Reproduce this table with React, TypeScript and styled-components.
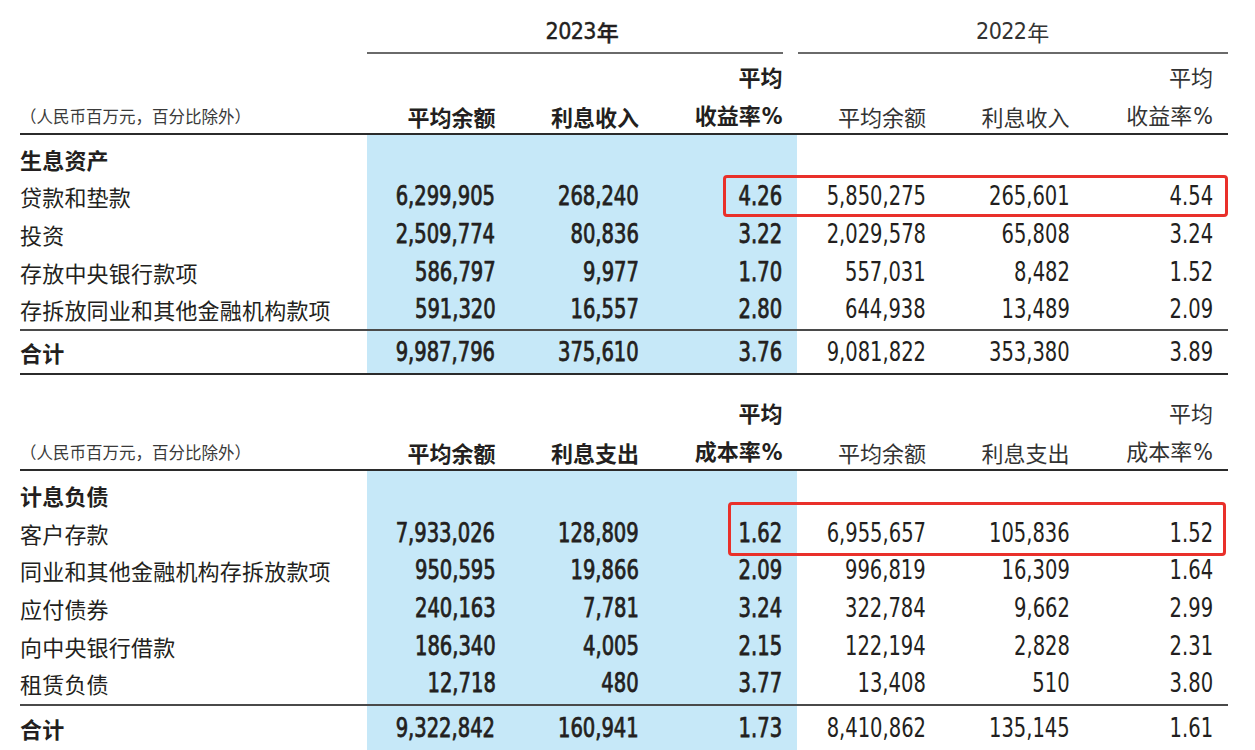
import React from 'react';
import styled, { createGlobalStyle, css } from 'styled-components';

const COLS = '347px repeat(6, 143.5px)';
const NUM_FONT = '"DejaVu Sans Condensed", "Liberation Sans", sans-serif';
const CJK_FONT = '"Noto Sans CJK SC", "Noto Sans", sans-serif';
const BLUE = '#c6e8f8';
const INK = '#231f20';

const GlobalStyle = createGlobalStyle`
  html, body { margin: 0; padding: 0; background: #ffffff; }
  body { font-family: ${CJK_FONT}; color: ${INK}; }
  * { box-sizing: border-box; }
`;

const Page = styled.div`
  width: 1228px;
  padding-left: 20px;
`;

const blueBand = css`
  background: linear-gradient(
    to right,
    transparent 347px,
    ${BLUE} 347px,
    ${BLUE} 777px,
    transparent 777px
  );
`;

const YearRow = styled.div`
  display: grid;
  grid-template-columns: ${COLS};
  height: 54px;
`;

const YearGroup = styled.div<{ $bold?: boolean; $trim?: boolean }>`
  grid-column: span 3;
  display: flex;
  align-items: flex-end;
  justify-content: center;
  padding-bottom: 8px;
  line-height: 26px;
  font-size: 22px;
  font-weight: ${(p) => (p.$bold ? 500 : 400)};
  -webkit-text-stroke: ${(p) => (p.$bold ? '0.4px currentColor' : '0')};
  border-bottom: 2px solid #6a6a6a;
  margin-right: ${(p) => (p.$trim ? '15px' : '0')};
  padding-left: ${(p) => (p.$trim ? '15px' : '0')};
  color: ${(p) => (p.$bold ? INK : '#333')};
`;

const YearDigits = styled.span`
  font-family: ${NUM_FONT};
  font-size: 23px;
  letter-spacing: -0.6px;
  margin-right: 1px;
`;

const HeaderRow = styled.div<{ $gap?: boolean }>`
  display: grid;
  grid-template-columns: ${COLS};
  height: 81px;
  padding-top: 3px;
  margin-top: ${(p) => (p.$gap ? '15px' : '0')};
  border-bottom: 2px solid #2b2b2b;
`;

const UnitCell = styled.div`
  align-self: end;
  font-size: 16.5px;
  line-height: 38px;
  color: #3a3a3a;
`;

const HeadCell = styled.div<{ $bold?: boolean }>`
  display: flex;
  flex-direction: column;
  justify-content: flex-end;
  align-items: flex-end;
  padding-right: 15px;
  font-size: 22px;
  line-height: 38px;
  font-weight: ${(p) => (p.$bold ? 600 : 400)};
  color: ${(p) => (p.$bold ? INK : '#333')};
  white-space: nowrap;
`;

const Pct = styled.span`
  font-family: ${NUM_FONT};
  font-size: 23px;
  margin-left: 1px;
`;

const Body = styled.div`
  display: flex;
  flex-direction: column;
  padding: 5px 0 1.5px;
  ${blueBand}
`;

const Row = styled.div`
  position: relative;
  display: grid;
  grid-template-columns: ${COLS};
  align-items: center;
  height: 37.6px;
`;

const TotalRow = styled.div<{ $closed?: boolean }>`
  display: grid;
  grid-template-columns: ${COLS};
  align-items: center;
  height: 46px;
  border-top: 2px solid #4a4a4a;
  border-bottom: ${(p) => (p.$closed ? '2px solid #2b2b2b' : 'none')};
  ${blueBand}
`;

const Label = styled.div<{ $bold?: boolean }>`
  font-size: 22px;
  font-weight: ${(p) => (p.$bold ? 600 : 400)};
  white-space: nowrap;
  letter-spacing: 0.2px;
`;

const NumCell = styled.div`
  text-align: right;
  padding-right: 15px;
  white-space: nowrap;
`;

const Digits = styled.span<{ $bold?: boolean }>`
  display: inline-block;
  font-family: ${NUM_FONT};
  font-size: 26px;
  line-height: 30px;
  font-weight: 400;
  color: ${INK};
  transform: scaleX(0.835);
  transform-origin: right center;
  -webkit-text-stroke: ${(p) => (p.$bold ? '0.75px currentColor' : '0')};
`;

const Mark = styled.div<{ $left: number; $right: number; $top: number; $h: number }>`
  position: absolute;
  left: ${(p) => p.$left}px;
  right: ${(p) => p.$right}px;
  top: ${(p) => p.$top}px;
  height: ${(p) => p.$h}px;
  border: 3px solid #e9302a;
  border-radius: 4px;
  pointer-events: none;
`;

type DataRow = { label: string; values: string[]; mark?: { left: number; right: number; top: number; h: number } };

type Section = {
  title: string;
  flow: string;
  rate: string;
  rows: DataRow[];
  total: string[];
  closed: boolean;
};

const sections: Section[] = [
  {
    title: '生息资产',
    flow: '利息收入',
    rate: '收益率',
    rows: [
      {
        label: '贷款和垫款',
        values: ['6,299,905', '268,240', '4.26', '5,850,275', '265,601', '4.54'],
        mark: { left: 703, right: 0, top: -3, h: 42 },
      },
      { label: '投资', values: ['2,509,774', '80,836', '3.22', '2,029,578', '65,808', '3.24'] },
      { label: '存放中央银行款项', values: ['586,797', '9,977', '1.70', '557,031', '8,482', '1.52'] },
      { label: '存拆放同业和其他金融机构款项', values: ['591,320', '16,557', '2.80', '644,938', '13,489', '2.09'] },
    ],
    total: ['9,987,796', '375,610', '3.76', '9,081,822', '353,380', '3.89'],
    closed: true,
  },
  {
    title: '计息负债',
    flow: '利息支出',
    rate: '成本率',
    rows: [
      {
        label: '客户存款',
        values: ['7,933,026', '128,809', '1.62', '6,955,657', '105,836', '1.52'],
        mark: { left: 708, right: 2, top: -12.5, h: 54 },
      },
      { label: '同业和其他金融机构存拆放款项', values: ['950,595', '19,866', '2.09', '996,819', '16,309', '1.64'] },
      { label: '应付债券', values: ['240,163', '7,781', '3.24', '322,784', '9,662', '2.99'] },
      { label: '向中央银行借款', values: ['186,340', '4,005', '2.15', '122,194', '2,828', '2.31'] },
      { label: '租赁负债', values: ['12,718', '480', '3.77', '13,408', '510', '3.80'] },
    ],
    total: ['9,322,842', '160,941', '1.73', '8,410,862', '135,145', '1.61'],
    closed: false,
  },
];

function Header({ s, gap }: { s: Section; gap?: boolean }) {
  const groups = [true, false];
  return (
    <HeaderRow $gap={gap}>
      <UnitCell>（人民币百万元，百分比除外）</UnitCell>
      {groups.map((bold) => (
        <React.Fragment key={String(bold)}>
          <HeadCell $bold={bold}>平均余额</HeadCell>
          <HeadCell $bold={bold}>{s.flow}</HeadCell>
          <HeadCell $bold={bold}>
            <span>平均</span>
            <span>
              {s.rate}
              <Pct>%</Pct>
            </span>
          </HeadCell>
        </React.Fragment>
      ))}
    </HeaderRow>
  );
}

function Values({ values }: { values: string[] }) {
  return (
    <>
      {values.map((v, i) => (
        <NumCell key={i}>
          <Digits $bold={i < 3}>{v}</Digits>
        </NumCell>
      ))}
    </>
  );
}

export default function App() {
  return (
    <Page>
      <GlobalStyle />
      <YearRow>
        <div />
        <YearGroup $bold $trim>
          <YearDigits>2023</YearDigits>年
        </YearGroup>
        <YearGroup>
          <YearDigits>2022</YearDigits>年
        </YearGroup>
      </YearRow>
      {sections.map((s, idx) => (
        <React.Fragment key={s.title}>
          <Header s={s} gap={idx > 0} />
          <Body>
            <Row>
              <Label $bold>{s.title}</Label>
            </Row>
            {s.rows.map((r) => (
              <Row key={r.label}>
                <Label>{r.label}</Label>
                <Values values={r.values} />
                {r.mark && <Mark $left={r.mark.left} $right={r.mark.right} $top={r.mark.top} $h={r.mark.h} />}
              </Row>
            ))}
          </Body>
          <TotalRow $closed={s.closed}>
            <Label $bold>合计</Label>
            <Values values={s.total} />
          </TotalRow>
        </React.Fragment>
      ))}
    </Page>
  );
}
